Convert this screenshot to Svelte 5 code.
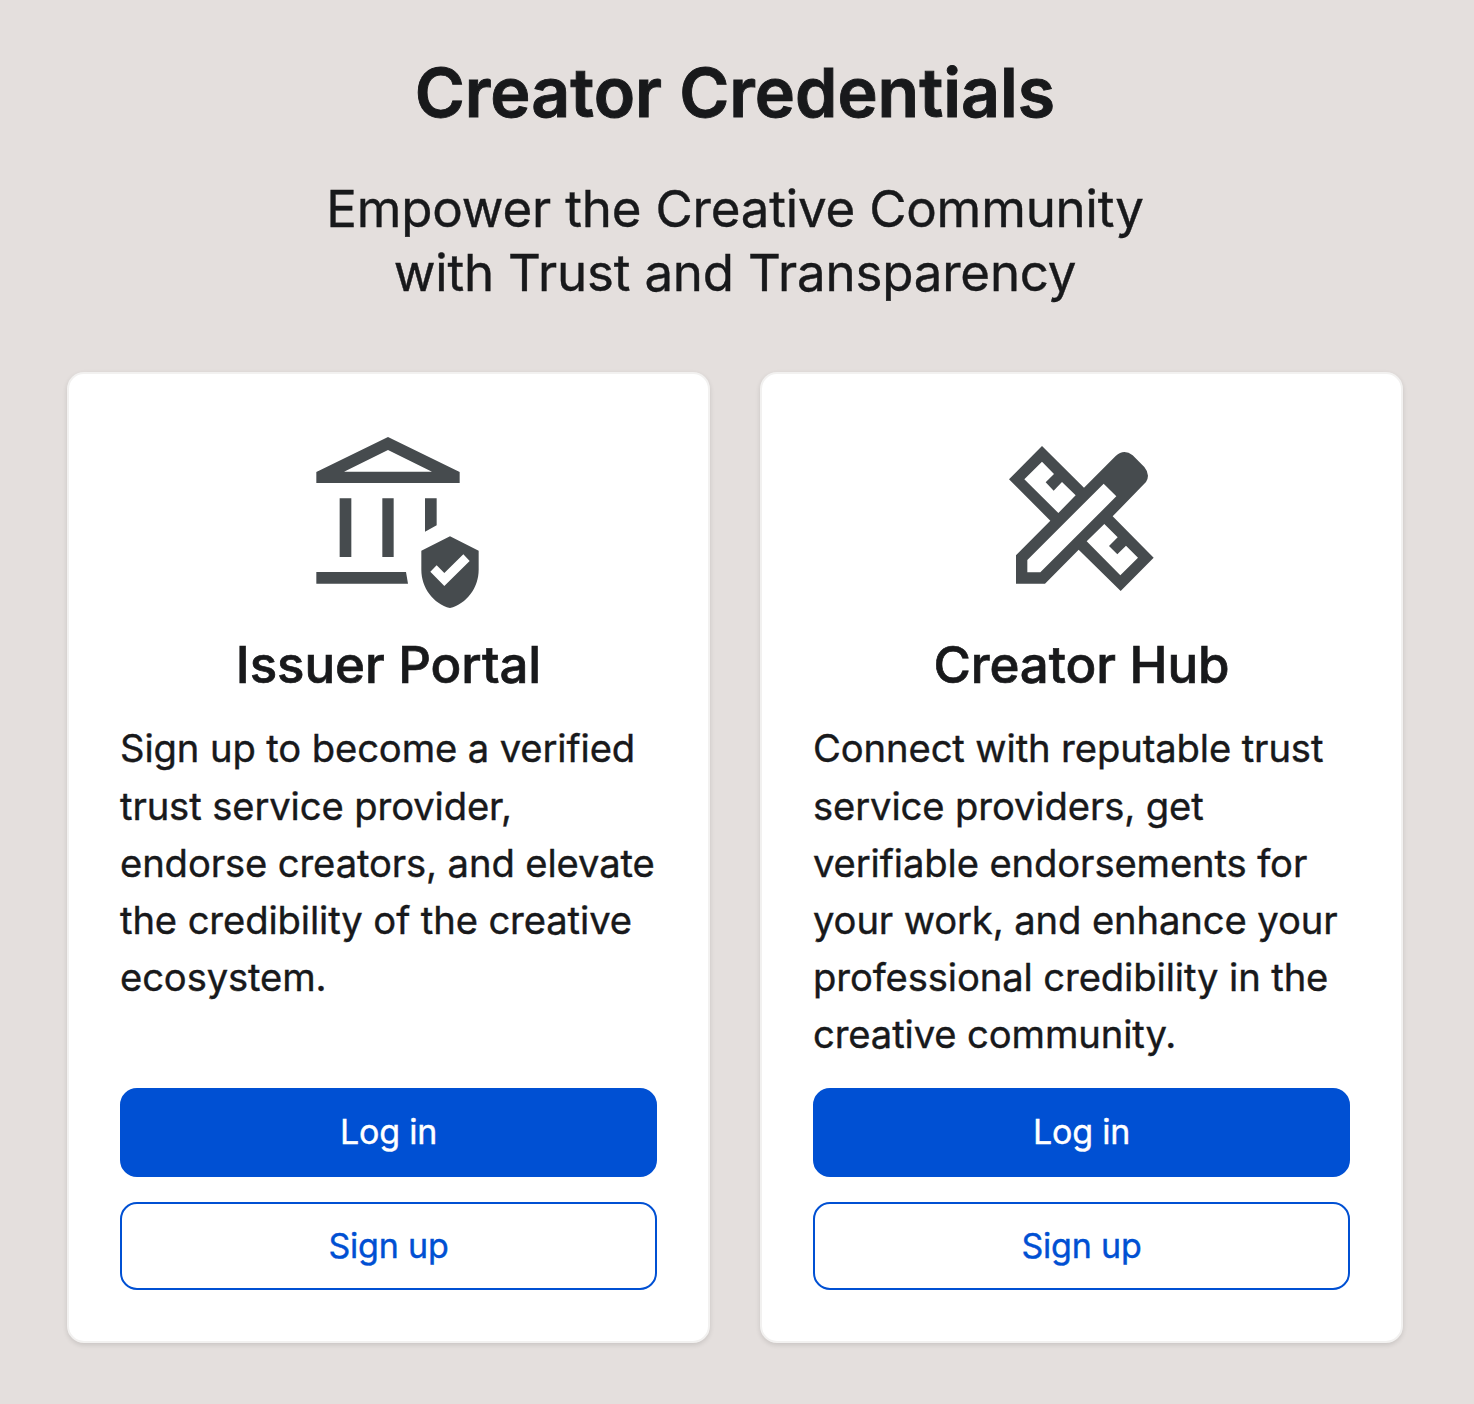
<script>
  const cards = [
    {
      icon: 'issuer',
      viewBox: '-33 0 600 585',
      title: 'Issuer Portal',
      text: 'Sign up to become a verified trust service provider, endorse creators, and elevate the credibility of the creative ecosystem.'
    },
    {
      icon: 'creator',
      viewBox: '-24 -15 600 585',
      title: 'Creator Hub',
      text: 'Connect with reputable trust service providers, get verifiable endorsements for your work, and enhance your professional credibility in the creative community.'
    }
  ];
</script>

<main>
  <h1>Creator Credentials</h1>
  <p class="tagline">Empower the Creative Community<br />with Trust and Transparency</p>

  <div class="cards">
    {#each cards as card}
      <section class="card">
        <svg class="icon" viewBox={card.viewBox} aria-hidden="true">
          {#if card.icon === 'issuer'}
            <path fill-rule="evenodd" d="M49 141 264 36 479 141V174H49ZM132 140H396L264 75Z" />
            <path d="M119 220H154V396H119ZM247 220H281V396H247ZM375 220H410V301L375 320ZM49 441H318L324 476H49Z" />
            <path
              fill-rule="evenodd"
              d="M450 334 536 377V434C536 488 500 536 450 549C400 536 364 488 364 434V377ZM391 440 433 483 509 408 490 388 433 444 410 421Z"
            />
          {:else}
            <path
              fill-rule="evenodd"
              d="M156 48 282 173 377 78Q402 55 428 76L463 111Q482 134 468 156L368 259 491 383 392 483 266 359 165 461H78V376L181 272 57 148ZM156 95 103 148 205 249 257 196 216 156 191 182 167 157 192 132ZM341 161 112 390V427H151L379 199ZM343 282 290 334 391 436 444 383 408 347 382 373 357 348 383 322Z"
            />
          {/if}
        </svg>
        <h2>{card.title}</h2>
        <p class="text">{card.text}</p>
        <div class="actions">
          <button class="primary">Log in</button>
          <button class="secondary">Sign up</button>
        </div>
      </section>
    {/each}
  </div>
</main>

<style>
  :global(body) {
    margin: 0;
    background: #e4dfdd;
  }
  main {
    box-sizing: border-box;
    height: 1404px;
    padding: 50px 71px 61px 67px;
    display: flex;
    flex-direction: column;
    font-family: Inter, 'Liberation Sans', sans-serif;
    color: #18191b;
    -webkit-text-stroke: 0.4px currentColor;
  }
  h1,
  h2,
  p {
    margin: 0;
  }
  h1 {
    font-size: 68px;
    line-height: 85px;
    font-weight: 600;
    text-align: center;
    -webkit-text-stroke-width: 0.9px;
  }
  .tagline {
    margin-top: 42px;
    font-size: 51px;
    line-height: 64px;
    letter-spacing: -0.17px;
    text-align: center;
  }
  .cards {
    flex: 1;
    margin-top: 67px;
    display: grid;
    grid-template-columns: 1fr 1fr;
    gap: 50px;
  }
  .card {
    box-sizing: border-box;
    padding: 51px;
    border: 2px solid #f2f1f0;
    border-radius: 17px;
    background: #fff;
    box-shadow: 0 2px 5px rgba(0, 0, 0, 0.12);
    display: flex;
    flex-direction: column;
    align-items: center;
  }
  .icon {
    width: 200px;
    height: 195px;
    flex: none;
    fill: #464b4e;
  }
  h2 {
    margin-top: 13px;
    font-size: 51px;
    line-height: 64px;
    font-weight: 500;
    letter-spacing: -0.05px;
    -webkit-text-stroke-width: 0.7px;
  }
  .text {
    margin-top: 23.4px;
    align-self: stretch;
    font-size: 38.2px;
    line-height: 57.2px;
    letter-spacing: -0.11px;
  }
  .actions {
    margin-top: auto;
    align-self: stretch;
    display: flex;
    flex-direction: column;
    gap: 25px;
  }
  button {
    box-sizing: border-box;
    height: 89px;
    padding: 0 0 2px;
    border: 2px solid #0050d3;
    border-radius: 17px;
    font: 400 34px/51px Inter, 'Liberation Sans', sans-serif;
    letter-spacing: -0.2px;
  }
  .primary {
    background: #0050d3;
    color: #fff;
    -webkit-text-stroke: 0.4px #fff;
  }
  .secondary {
    height: 88px;
    background: #fff;
    color: #0050d3;
    -webkit-text-stroke: 0.4px #0050d3;
  }
</style>
